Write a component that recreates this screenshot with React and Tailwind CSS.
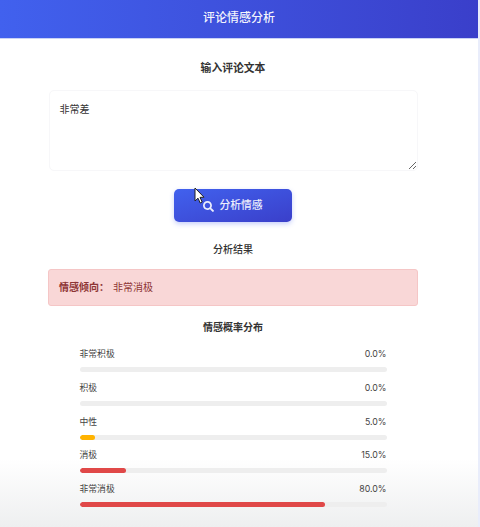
import { FaSearch } from 'react-icons/fa'

const FONT = "font-['Inter','Noto_Sans_CJK_SC',sans-serif]"

const ROWS = [
  { label: '非常积极', value: 0, bar: 'bg-[#4caf50]' },
  { label: '积极', value: 0, bar: 'bg-[#8bc34a]' },
  { label: '中性', value: 5, bar: 'bg-[#ffb300]' },
  { label: '消极', value: 15, bar: 'bg-[#e04848]' },
  { label: '非常消极', value: 80, bar: 'bg-[#e04848]' },
]

function ProbRow({ label, value, bar }) {
  return (
    <div className="h-[33.75px]">
      <div className="flex h-[13px] items-center justify-between text-[8.8px] leading-none text-[#444]">
        <span>{label}</span>
        <span>{value.toFixed(1)}%</span>
      </div>
      <div className="mt-[6px] h-[5px] rounded-full bg-[#eeeeee] overflow-hidden">
        <div className={`h-full rounded-full ${bar}`} style={{ width: `${value}%` }} />
      </div>
    </div>
  )
}

export default function App() {
  return (
    <div className={`relative h-[527px] w-[480px] overflow-hidden border-r-2 border-[#e9edfb] bg-[linear-gradient(to_bottom,#ffffff_87%,#eeeff0_100%)] ${FONT}`}>
      {/* Header */}
      <header className="flex h-[39px] items-center justify-center border-b border-[#c9d2f5] bg-gradient-to-r from-[#4161ee] to-[#3a3fca] pb-[3px] text-[12px] font-medium text-white/95">
        评论情感分析
      </header>

      <main className="flex flex-col items-center pl-[48px] pr-[60px]">
        <h2 className="mt-[23px] h-[14px] text-[10.8px] leading-[14px] font-bold text-[#333]">输入评论文本</h2>

        <textarea
          readOnly
          defaultValue="非常差"
          className="mt-[14px] h-[81px] w-[369px] rounded-[5px] border border-[#f7f7f9] bg-white px-[10px] py-[11px] text-[10px] leading-[14px] text-[#333] outline-none"
        />

        <button className="mt-[18px] flex h-[33px] w-[118px] items-center justify-center gap-[5px] rounded-[5px] bg-gradient-to-br from-[#4161ee] to-[#3a3fca] pt-[2px] text-[10.8px] font-medium text-white/90 shadow-[0_2px_5px_rgba(65,97,238,0.3)]">
          <FaSearch size={11} />
          分析情感
        </button>

        <h3 className="mt-[20px] h-[14px] text-[10px] leading-[14px] font-medium text-[#333]">分析结果</h3>

        <div className="mt-[13px] flex h-[37px] w-full items-center rounded-[3px] border border-[#f5c6c6] bg-[#f9d7d7] px-[10px] text-[10px] text-[#8e3535]">
          <span className="w-[54px] font-bold">情感倾向：</span>
          <span>非常消极</span>
        </div>

        <h3 className="mt-[14px] h-[14px] text-[10px] leading-[14px] font-bold text-[#333]">情感概率分布</h3>

        <div className="mt-[14px] w-[307px]">
          {ROWS.map((row) => (
            <ProbRow key={row.label} {...row} />
          ))}
        </div>
      </main>

      {/* Mouse pointer */}
      <svg className="absolute left-[194px] top-[187px]" width="12" height="18" viewBox="0 0 12 18">
        <path d="M1 1 L1 14 L4 11.2 L6.2 16 L8.2 15 L6 10.4 L10 10.2 Z" fill="#fff" stroke="#222" strokeWidth="1" />
      </svg>
    </div>
  )
}
